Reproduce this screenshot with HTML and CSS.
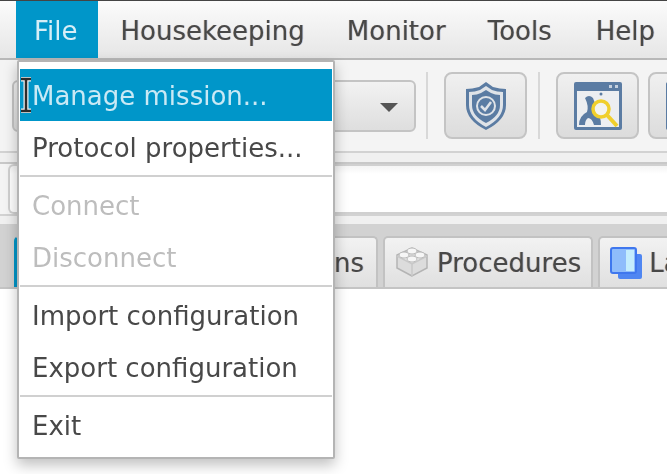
FILE: index.html
```html
<!DOCTYPE html>
<html lang="en">
<head>
    <meta charset="UTF-8">
    <meta name="viewport" content="width=device-width, initial-scale=1.0">
    <title>Mission Control</title>
    <link rel="stylesheet" href="styles.css">
</head>
<body>
    <div class="app">
        <nav class="menubar">
            <span class="menu menu-open">File</span>
            <span class="menu">Housekeeping</span>
            <span class="menu">Monitor</span>
            <span class="menu">Tools</span>
            <span class="menu menu-help">Help</span>
        </nav>

        <div class="toolbar">
            <div class="combo"><span class="combo-arrow"></span></div>
            <span class="tool-sep"></span>
            <button class="tool-btn">
                <svg width="44" height="50" viewBox="0 0 44 50">
                    <path d="M22 1 L29 6 Q36 8 42 8 L42 24 Q42 39 22 49 Q2 39 2 24 L2 8 Q8 8 15 6 Z" fill="#5b7ca3"/>
                    <path d="M22 5 L28 9 Q33 11 39 11 L39 24 Q39 37 22 46 Q5 37 5 24 L5 11 Q11 11 16 9 Z" fill="#dfe3e8"/>
                    <path d="M22 9 L27 12 Q31 14 36 14 L36 24 Q36 35 22 42 Q8 35 8 24 L8 14 Q13 14 17 12 Z" fill="#5b7ca3"/>
                    <circle cx="22" cy="25" r="9" fill="none" stroke="#dfe3e8" stroke-width="2"/>
                    <path d="M17 25 L21 29 L27 21" fill="none" stroke="#dfe3e8" stroke-width="2.5"/>
                </svg>
            </button>
            <span class="tool-sep"></span>
            <button class="tool-btn">
                <svg width="48" height="48" viewBox="0 0 48 48">
                    <rect width="48" height="48" rx="2" fill="#5b7ca3"/>
                    <rect x="3" y="9" width="42" height="36" fill="#eceef1"/>
                    <rect x="35" y="3" width="3" height="3" fill="#c5d0de"/>
                    <rect x="41" y="3" width="3" height="3" fill="#c5d0de"/>
                    <path d="M11 16 Q15 12 19 16 Q22 22 22 28 Q27 34 27 43 L20 43 Q18 36 14 36 Q11 38 11 43 L5 43 Q5 34 13 30 Q15 24 11 16 Z" fill="#5b7ca3"/>
                    <circle cx="27" cy="12" r="1.5" fill="#5b7ca3"/>
                    <circle cx="27" cy="27" r="8" fill="#f3f3ee" stroke="#f0cf2c" stroke-width="3.5"/>
                    <path d="M33 33 L43 44" stroke="#f0cf2c" stroke-width="4"/>
                </svg>
            </button>
            <button class="tool-btn tool-btn-next">
                <svg width="48" height="48" viewBox="0 0 48 48">
                    <rect width="48" height="48" rx="2" fill="#5b7ca3"/>
                </svg>
            </button>
        </div>

        <div class="strip"></div>
        <div class="field-row"><div class="field"></div></div>
        <div class="strip strip-low"></div>

        <div class="tabs">
            <span class="tab tab-selected"></span>
            <span class="tab tab-wide">Operations</span>
            <span class="tab tab-proc">
                <svg width="34" height="32" viewBox="0 2 34 32">
                    <path d="M17 31 L2 23 L2 10 L17 3 L32 10 L32 23 Z" fill="#dcdcdc" stroke="#b4b4b4" stroke-width="1.5"/>
                    <path d="M2 11 L17 19 L32 11 M17 19 L17 31" fill="#e9e9e9" stroke="#c8c8c8" stroke-width="1.5"/>
                    <ellipse cx="17" cy="6" rx="5" ry="3" fill="#f6f6f6" stroke="#bbb"/>
                    <ellipse cx="9" cy="10" rx="5" ry="3" fill="#f6f6f6" stroke="#bbb"/>
                    <ellipse cx="25" cy="10" rx="5" ry="3" fill="#f6f6f6" stroke="#bbb"/>
                    <ellipse cx="17" cy="14" rx="5" ry="3" fill="#f6f6f6" stroke="#bbb"/>
                </svg>
                Procedures
            </span>
            <span class="tab tab-last">
                <svg width="33" height="33" viewBox="0 0 33 33">
                    <rect x="8" y="7" width="24" height="25" rx="2" fill="#4f86f2"/>
                    <rect x="1" y="1" width="25" height="25" rx="2" fill="#8fbcfb" stroke="#3f77ee" stroke-width="2"/>
                    <rect x="16" y="3" width="8" height="21" fill="#c4ecfd"/>
                </svg>
                Layers
            </span>
        </div>
        <main class="content"></main>

        <ul class="popup">
            <li class="item item-active">Manage mission...</li>
            <li class="item">Protocol properties...</li>
            <li class="sep"></li>
            <li class="item item-off">Connect</li>
            <li class="item item-off">Disconnect</li>
            <li class="sep"></li>
            <li class="item">Import configuration</li>
            <li class="item">Export configuration</li>
            <li class="sep"></li>
            <li class="item">Exit</li>
        </ul>

        <svg class="cursor" width="14" height="36" viewBox="0 0 14 36">
            <path d="M2 2 L12 2 M2 34 L12 34 M7 2 L7 34" fill="none" stroke="#f2f2f2" stroke-width="5"/>
            <path d="M2 2 L12 2 M2 34 L12 34 M7 2 L7 34" fill="none" stroke="#2c2c2c" stroke-width="2.5"/>
        </svg>
    </div>
</body>
</html>
```

FILE: styles.css
```css
html, body {
    margin: 0;
    padding: 0;
    background-color: white;
}
.app {
    position: relative;
    width: 667px;
    height: 474px;
    overflow: hidden;
    font-family: 'DejaVu Sans', sans-serif;
    font-size: 26px;
    color: #484848;
    background-color: white;
    filter: blur(0.55px);
}
.menubar {
    display: flex;
    height: 57px;
    padding-left: 16px;
    border-top: 1px solid #444;
    border-bottom: 2px solid #b8b8b8;
    background: linear-gradient(#fbfbfb, #e6e6e6);
}
.menu {
    display: flex;
    align-items: center;
    padding: 2px 21px 0;
    text-shadow: -0.7px 0 rgba(200,120,40,0.3), 0.7px 0 rgba(60,110,200,0.3);
}
.menu-open {
    margin-right: 2px;
    padding: 2px 20px 0 18px;
    background-color: #0096c9;
    color: #d6eef7;
    text-shadow: none;
}
.menu-help {
    margin-left: 2px;
}
.toolbar {
    display: flex;
    align-items: center;
    height: 91px;
    padding-left: 12px;
    background-color: #f4f4f4;
}
.combo {
    position: relative;
    flex: none;
    box-sizing: border-box;
    width: 404px;
    height: 52px;
    border: 2px solid #c4c4c4;
    border-radius: 6px;
    background: linear-gradient(#f2f2f2, #dedede);
}
.combo-arrow {
    position: absolute;
    right: 16px;
    top: 21px;
    border-left: 9px solid transparent;
    border-right: 9px solid transparent;
    border-top: 9px solid #555;
}
.tool-sep {
    flex: none;
    width: 2px;
    height: 67px;
    margin: 0 11px 0 10px;
    background-color: #d8d8d8;
}
.tool-btn {
    display: flex;
    align-items: center;
    justify-content: center;
    box-sizing: border-box;
    flex: none;
    width: 83px;
    height: 67px;
    margin: 0 1px 0 5px;
    padding: 0;
    border: 2px solid #c4c4c4;
    border-radius: 8px;
    background: linear-gradient(#f0f0f0, #dcdcdc);
}
.tool-btn-next {
    margin-left: 8px;
}
.strip {
    box-sizing: border-box;
    height: 13px;
    border-top: 2px solid #d2d2d2;
    border-bottom: 2px solid #c8c8c8;
    background-color: #f0f0f0;
}
.strip-low {
    height: 10px;
    border-bottom: none;
}
.field-row {
    height: 50px;
    padding-left: 8px;
    background-color: #f4f4f4;
}
.field {
    box-sizing: border-box;
    height: 100%;
    border: 2px solid #d0d0d0;
    border-right: none;
    border-radius: 6px 0 0 6px;
    background: linear-gradient(#f4f4f4, white 8px);
}
.tabs {
    display: flex;
    align-items: flex-end;
    gap: 5px;
    height: 65px;
    padding-left: 14px;
    background-color: #d2d2d2;
    border-bottom: 2px solid #c4c4c4;
    box-sizing: border-box;
}
.tab {
    display: flex;
    flex: none;
    align-items: center;
    gap: 8px;
    box-sizing: border-box;
    height: 51px;
    padding: 1px 12px 0;
    border: 2px solid #c2c2c2;
    border-bottom: none;
    border-radius: 5px 5px 0 0;
    background: linear-gradient(#f2f2f2, #e0e0e0);
    text-shadow: -0.7px 0 rgba(200,120,40,0.3), 0.7px 0 rgba(60,110,200,0.3);
}
.tab-selected {
    width: 120px;
    border-left: 3px solid #0096c9;
}
.tab-wide {
    justify-content: flex-end;
    width: 239px;
}
.tab-proc {
    padding: 1px 10px 0;
}
.tab-last {
    gap: 6px;
    width: 200px;
    padding-left: 10px;
}
.content {
    height: 185px;
    background-color: white;
}
.popup {
    position: absolute;
    left: 17px;
    top: 60px;
    box-sizing: border-box;
    width: 318px;
    height: 399px;
    margin: 0;
    padding: 7px 1px 6px 1px;
    list-style: none;
    background-color: white;
    border: 2px solid #b4b4b4;
    border-radius: 2px;
    box-shadow: 0 6px 14px rgba(0,0,0,0.25);
}
.item {
    height: 52px;
    padding-left: 12px;
    line-height: 54px;
}
.item-active {
    background-color: #0096c9;
    color: #c9e9f5;
}
.item-off {
    color: #bdbdbd;
}
.sep {
    height: 2px;
    margin: 2px 0;
    background-color: #d0d0d0;
}
.cursor {
    position: absolute;
    left: 19px;
    top: 77px;
}
```
